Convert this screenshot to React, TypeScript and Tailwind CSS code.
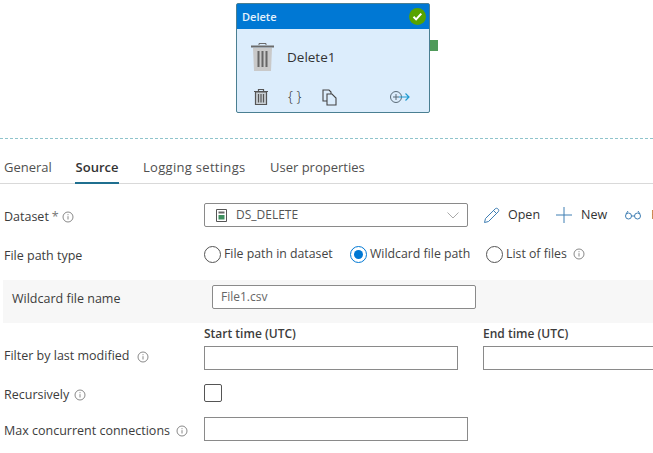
const font = "font-['Open_Sans',sans-serif]";

function Info() {
  return (
    <svg width="12" height="12" viewBox="0 0 12 12" fill="none" stroke="#6b6b6b" strokeWidth="0.8" className="shrink-0">
      <circle cx="6" cy="6" r="5" />
      <path d="M6 5.2v3.3M6 3.2v1" />
    </svg>
  );
}

function TrashSmall() {
  return (
    <svg width="16" height="18" viewBox="0 0 16 18" fill="none" stroke="#555" strokeWidth="1.2">
      <path d="M1 3.5h14M5.5 3V1.5h5V3" />
      <path d="M2.5 4h11v12.5h-11z" fill="#c8ced3" />
      <path d="M5.5 6v8.5M8 6v8.5M10.5 6v8.5" />
    </svg>
  );
}

function Radio({ checked, label, info, width }: { checked?: boolean; label: string; info?: boolean; width: string }) {
  return (
    <div className={`flex items-center gap-[3px] ${width}`}>
      <span className={`flex h-[17px] w-[17px] shrink-0 items-center justify-center rounded-full border ${checked ? "border-[#0078d4]" : "border-[#555]"}`}>
        {checked && <span className="h-[9px] w-[9px] rounded-full bg-[#0078d4]" />}
      </span>
      <span className="whitespace-nowrap pt-[1px] text-[12.3px] text-[#444]">{label}</span>
      {info && <span className="ml-[3px]"><Info /></span>}
    </div>
  );
}

function Label({ text, info, gap = "gap-[5px]" }: { text: string; info?: boolean; gap?: string }) {
  return (
    <div className={`flex w-[200px] shrink-0 items-center text-[12.5px] font-medium text-[#3c3c3c] ${gap}`}>
      <span>{text}</span>
      {info && <Info />}
    </div>
  );
}

export default function App() {
  return (
    <div className={`${font} h-[453px] w-[653px] overflow-hidden bg-white`}>
      {/* Canvas */}
      <div className="h-[139px] border-b border-dashed border-[#8fc4cc] pl-[236px] pt-[3px]">
        <div className="relative h-[110px] w-[194px] rounded-[2px] border border-[#4a7f92] bg-[#dcedfc]">
          <div className="flex h-[25px] items-center justify-between bg-[#0078d4] pl-[5px] pr-[3px] text-[11px] font-semibold text-[#e6f2fb]">
            <span className="pt-[1px]">Delete</span>
            <span className="flex h-[17px] w-[17px] items-center justify-center rounded-full bg-[#57a300]">
              <svg width="11" height="11" viewBox="0 0 11 11" fill="none" stroke="#fff" strokeWidth="2">
                <path d="M1.5 5.8l2.6 2.6 5.2-5.800" />
              </svg>
            </span>
          </div>
          <div className="flex items-center pl-[13px] pt-[13px]">
            <svg width="25" height="30" viewBox="0 0 25 30">
              <path d="M1 4.500h23" stroke="#6b6b6b" strokeWidth="2" />
              <path d="M9 3V1.500h7V3" fill="none" stroke="#6b6b6b" />
              <path d="M3 6h19l-1 23H4z" fill="#c9c9c9" />
              <path d="M8.500 9v16M12.500 9v16M16.500 9v16" stroke="#666" strokeWidth="2" />
            </svg>
            <span className="ml-[12px] text-[13.5px] text-[#333]">Delete1</span>
          </div>
          <div className="flex items-center pl-[16px] pt-[16px]">
            <TrashSmall />
            <span className="ml-[19px] w-[16px] whitespace-nowrap text-[14px] font-light leading-[18px] text-[#333]">{"{ }"}</span>
            <svg className="ml-[18px]" width="15" height="17" viewBox="0 0 15 17" fill="#dcedfc" stroke="#444" strokeWidth="1.1">
              <path d="M1 1h6l2 2v9H1z" />
              <path d="M5 5h5l4 4v7H5z" />
            </svg>
            <svg className="ml-[52px]" width="22" height="14" viewBox="0 0 22 14" fill="none" strokeWidth="1">
              <circle cx="7" cy="7" r="5.500" stroke="#5a6b78" />
              <path d="M4 7h6M7 4v6" stroke="#5a6b78" />
              <path d="M10 7h10M16.500 3.500L20 7l-3.500 3.500" stroke="#1f9bd1" strokeWidth="1.2" />
            </svg>
          </div>
          <div className="absolute left-[193px] top-[36px] h-[11px] w-[8px] bg-[#4f9a5a]" />
        </div>
      </div>

      {/* Tabs */}
      <div className="flex h-[45px] gap-[24px] border-b border-[#d9d9d9] pl-[4px] pt-[19px] text-[13px] text-[#505050]">
        <span className="w-[47px] whitespace-nowrap">General</span>
        <span className="h-[26px] w-[44px] whitespace-nowrap border-b-2 border-[#1f6f8f] text-center font-semibold text-[#333]">Source</span>
        <span className="w-[103px] whitespace-nowrap tracking-[0.3px]">Logging settings</span>
        <span className="whitespace-nowrap">User properties</span>
      </div>

      {/* Form */}
      <div className="pl-[4px] pt-[19px]">
        <div className="flex h-[24px] items-center">
          <div className="flex w-[200px] shrink-0 items-center gap-[3px] pt-[4px] text-[12.5px] font-medium text-[#3c3c3c]">
            <span>Dataset</span>
            <span className="text-[#777]">*</span>
            <Info />
          </div>
          <div className="flex h-[24px] w-[264px] shrink-0 items-center rounded-[2px] border border-[#8a8a8a] pl-[11px] pr-[8px]">
            <svg width="11" height="13" viewBox="0 0 11 13">
              <path d="M.5.500h10v12H.5z" fill="#fff" stroke="#555" />
              <path d="M2.500 2.500h6v2h-6z" fill="#666" />
              <path d="M2.500 6h6v4.500h-6z" fill="#3f8f5f" />
            </svg>
            <span className="ml-[9px] flex-1 text-[12px] text-[#555]">DS_DELETE</span>
            <svg width="12" height="7" viewBox="0 0 12 7" fill="none" stroke="#aaa">
              <path d="M.5.500L6 6l5.500-5.500" />
            </svg>
          </div>
          <div className="ml-[15px] flex shrink-0 items-center whitespace-nowrap text-[12.5px] text-[#333]">
            <svg width="17" height="17" viewBox="0 0 17 17" fill="none" stroke="#3f7eb3" strokeWidth="1">
              <path d="M1.500 15.500l1-4L12 2c1-1 2-1 3 0s1 2 0 3l-9.500 9.500z" />
              <path d="M10.500 3.500l3 3" />
            </svg>
            <span className="ml-[8px]">Open</span>
            <svg className="ml-[16px]" width="16" height="16" viewBox="0 0 16 16" stroke="#3f7eb3">
              <path d="M8 0v16M0 8h16" />
            </svg>
            <span className="ml-[9px]">New</span>
            <svg className="ml-[18px]" width="16" height="10" viewBox="0 0 16 10" fill="none" stroke="#3f7eb3">
              <circle cx="3.500" cy="6" r="3" />
              <circle cx="12.500" cy="6" r="3" />
              <path d="M6.500 6h3M1 4l2-3M15 4l-2-3" />
            </svg>
            <span className="ml-[10px]">Preview</span>
          </div>
        </div>

        <div className="mt-[15px] flex h-[24px] items-center">
          <div className="w-[200px] shrink-0 pt-[4px] text-[12.5px] font-medium text-[#3c3c3c]">File path type</div>
          <div className="flex">
            <Radio width="w-[146px]" label="File path in dataset" />
            <Radio width="w-[136px]" checked label="Wildcard file path" />
            <Radio width="w-[110px]" label="List of files" info />
          </div>
        </div>
      </div>

      <div className="ml-[3px] mt-[14px] flex h-[43px] items-start bg-[#f7f7f7] pl-[9px] pt-[5px]">
        <div className="h-[24px] w-[200px] shrink-0 text-[12.5px] font-medium leading-[27px] text-[#3c3c3c]">Wildcard file name</div>
        <div className="flex h-[24px] w-[264px] items-center rounded-[2px] border border-[#8a8a8a] bg-white pl-[8px] text-[12px] text-[#666]">
          File1.csv
        </div>
      </div>

      <div className="pl-[4px]">
        <div className="flex h-[47px]">
          <div className="flex w-[200px] shrink-0 items-end pb-[4px]">
            <Label text="Filter by last modified" info gap="gap-[8px]" />
          </div>
          <div className="w-[254px] shrink-0 pt-[2px]">
            <div className="h-[21px] text-[12px] font-semibold text-[#3c3c3c]">Start time (UTC)</div>
            <div className="h-[24px] w-[254px] border border-[#8a8a8a]" />
          </div>
          <div className="ml-[25px] w-[200px] shrink-0 pt-[2px]">
            <div className="h-[21px] text-[12px] font-semibold text-[#3c3c3c]">End time (UTC)</div>
            <div className="h-[24px] w-[200px] border border-[#8a8a8a]" />
          </div>
        </div>

        <div className="mt-[14px] flex h-[18px] items-center">
          <div className="w-[200px] shrink-0 pt-[4px]">
            <Label text="Recursively" info />
          </div>
          <div className="h-[18px] w-[18px] rounded-[2px] border border-[#555]" />
        </div>

        <div className="mt-[15px] flex h-[24px] items-center">
          <div className="w-[200px] shrink-0 pt-[4px]">
            <Label text="Max concurrent connections" info gap="gap-[6px]" />
          </div>
          <div className="h-[24px] w-[264px] border border-[#8a8a8a]" />
        </div>
      </div>
    </div>
  );
}
